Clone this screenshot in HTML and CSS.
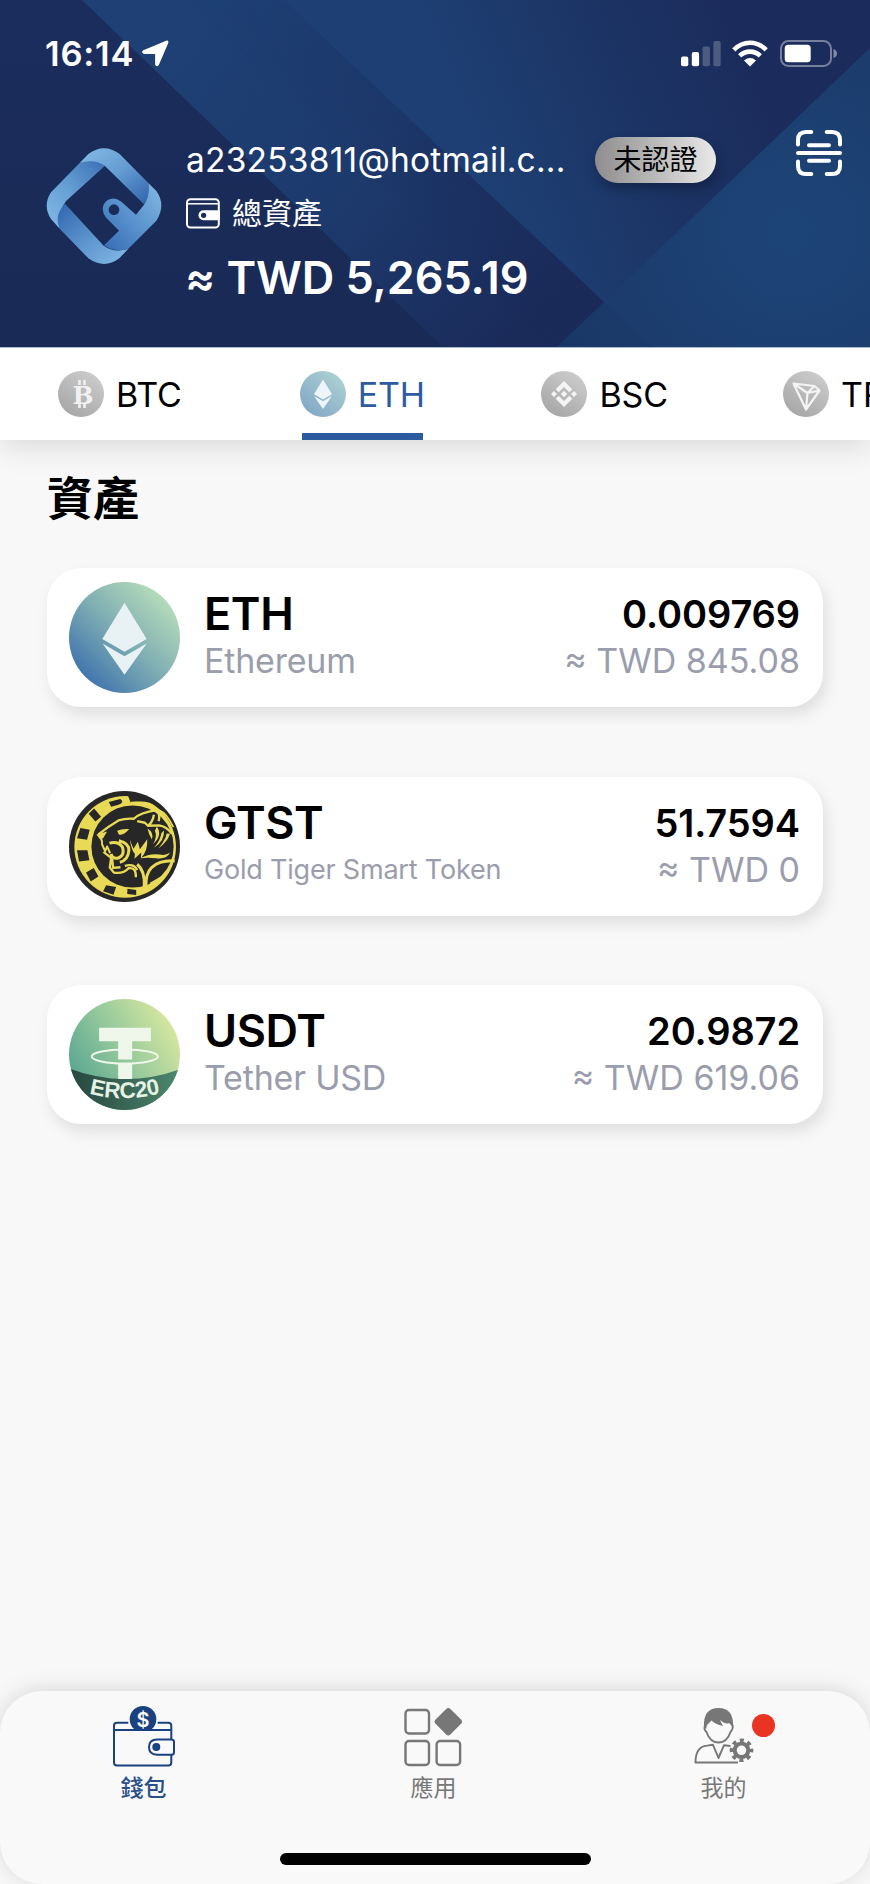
FILE: index.html
```html
<!DOCTYPE html>
<html lang="zh-Hant">
<head>
<meta charset="utf-8">
<title>錢包</title>
<link rel="stylesheet" href="styles.css">
</head>
<body>
<div class="app">
  <header class="header">
    <svg class="header-bg" viewBox="0 0 870 347" preserveAspectRatio="none" aria-hidden="true">
      <defs>
        <linearGradient id="bandA" gradientUnits="userSpaceOnUse" x1="180" y1="30" x2="520" y2="330"><stop offset="0" stop-color="#1e4074"/><stop offset=".5" stop-color="#1d3a6d"/><stop offset="1" stop-color="#1a2b5a"/></linearGradient>
        <linearGradient id="shade" gradientUnits="userSpaceOnUse" x1="183" y1="0" x2="230" y2="-50"><stop offset="0" stop-color="#1a2a59" stop-opacity="0"/><stop offset="1" stop-color="#1a2a59" stop-opacity=".3"/></linearGradient>
        <linearGradient id="fade" x1="0" y1="0" x2="0" y2="1"><stop offset="0" stop-color="#fff" stop-opacity=".15"/><stop offset=".45" stop-color="#fff"/></linearGradient>
        <mask id="fadeMask"><path fill="url(#fade)" d="M0 0H870V347H0z"/></mask>
        <linearGradient id="bandB" gradientUnits="userSpaceOnUse" x1="500" y1="200" x2="760" y2="90"><stop offset="0" stop-color="#1e3f73"/><stop offset=".4" stop-color="#1c3768"/><stop offset="1" stop-color="#1b2c5c"/></linearGradient>
        <radialGradient id="tri" gradientUnits="userSpaceOnUse" cx="790" cy="230" r="240"><stop offset="0" stop-color="#1d4477"/><stop offset="1" stop-color="#1b3a6a"/></radialGradient>
        <linearGradient id="left" x1="0" y1="0" x2="0" y2="1"><stop offset="0" stop-color="#1b2d5d"/><stop offset="1" stop-color="#192a55"/></linearGradient>
      </defs>
      <path fill="url(#left)" d="M0 0H870V347H0z"/>
      <path fill="url(#bandA)" d="M82 0H283L652 347H443z"/>
      <path fill="url(#shade)" mask="url(#fadeMask)" d="M183 0H283L652 347H552z"/>
      <path fill="url(#bandB)" d="M283 0H870V347H652z"/>
      <path fill="url(#tri)" d="M870 48V347H557z"/>
      <path fill="#18305f" fill-opacity=".2" d="M603 301L652 347H557z"/>
    </svg>

    <div class="status">
      <span class="time">16:14</span>
      <svg class="locate" viewBox="0 0 28 28"><path fill="#fff" d="M25 .7Q28 .2 27.200 3L17.800 25.200Q16.600 28 14.400 26.800Q13.600 26.200 13.600 25V14.400H2.600Q-.6 14 .3 11.800Q.7 10.900 2 10.400z"/></svg>
      <div class="status-icons">
        <svg width="40" height="27" viewBox="0 0 40 27"><g fill="#fff"><rect y="16.500" width="7.300" height="9.700" rx="2"/><rect x="10.800" y="12" width="7.300" height="14.200" rx="2"/><g opacity=".22"><rect x="21.600" y="6.600" width="7.300" height="19.600" rx="2"/><rect x="32.400" y="1" width="7.300" height="25.200" rx="2"/></g></g></svg>
        <svg class="wifi" width="36" height="27" viewBox="0 0 36 27"><g fill="none" stroke="#fff" stroke-width="4.600"><path d="M1.800 9.800Q9 2.700 18 2.700T34.200 9.800"/><path d="M7.700 15.800Q12 11.600 18 11.600T28.300 15.800"/></g><path fill="#fff" d="M12 20.400Q18 15.600 24 20.400L18 26.400z"/></svg>
        <svg class="battery" width="58" height="27" viewBox="0 0 58 27"><rect x="1" y="1" width="50" height="25" rx="7.500" fill="none" stroke="#fff" stroke-opacity=".4" stroke-width="2"/><rect x="4.700" y="4.700" width="26" height="17.600" rx="3.500" fill="#fff"/><path fill="#fff" fill-opacity=".45" d="M53.500 9Q57 10.500 57 13.500T53.500 18z"/></svg>
      </div>
    </div>

    <div class="account">
      <svg class="logo" viewBox="50 55 346 348">
        <defs>
          <linearGradient id="l1" x1="0" y1="1" x2="1" y2="0"><stop offset="0" stop-color="#83bbe6"/><stop offset=".5" stop-color="#649dd3"/><stop offset="1" stop-color="#3a6fb5"/></linearGradient>
          <linearGradient id="l2" x1="0" y1="0" x2="1" y2="1"><stop offset="0" stop-color="#84bbe5"/><stop offset=".5" stop-color="#649cd2"/><stop offset="1" stop-color="#3163ac"/></linearGradient>
          <linearGradient id="l3" x1="1" y1="0" x2="0" y2="1"><stop offset="0" stop-color="#83b9e3"/><stop offset=".5" stop-color="#5b94ce"/><stop offset="1" stop-color="#346bb4"/></linearGradient>
          <linearGradient id="l4" x1="0" y1="0" x2="1" y2="1"><stop offset="0" stop-color="#3264ae"/><stop offset=".5" stop-color="#5b93cd"/><stop offset="1" stop-color="#84bce7"/></linearGradient>
        </defs>
        <path fill="url(#l1)" d="M90 297L64 268Q38 228 64 188L150 100Q185 80 226 108L110 213Q88 238 90 297z"/>
        <path fill="url(#l4)" d="M106 222Q72 258 90 297L176 386Q224 420 269 386L296 357Q254 371 222 348L106 222z"/>
        <path fill="url(#l2)" d="M150 100L176 73Q223 38 270 73L356 160Q361 199 343 224L225 108Q193 87 150 100z"/>
        <path fill="url(#l3)" d="M356 160L380 184Q410 226 380 273L296 357Q255 370 223 347L268 303L228 263Q208 232 233 212Q253 199 275 216L319 255L343 225Q361 200 356 160z"/>
        <circle cx="253" cy="240" r="16" fill="#1a2d5a"/>
      </svg>
      <div class="account-info">
        <div class="account-row">
          <span class="email">a23253811@hotmail.c...</span>
          <span class="badge">未認證</span>
        </div>
        <div class="total-label">
          <svg width="35" height="31" viewBox="0 0 35 31"><rect x="1" y="1.200" width="31.800" height="28.400" rx="3.500" fill="none" stroke="#fff" stroke-width="2"/><path d="M1 5.800H32.500" stroke="#fff" stroke-width="1.500"/><path fill="#fff" d="M17.500 12.300H34V22.300H17.500A5 5 0 0 1 17.500 12.300z"/><circle cx="17.600" cy="17.300" r="2.600" fill="#1a2c5b"/></svg>
          <span>總資產</span>
        </div>
        <div class="total">≈ TWD 5,265.19</div>
      </div>
      <svg class="scan" width="46" height="46" viewBox="0 0 46 46"><g fill="none" stroke="#fff" stroke-width="4" stroke-linecap="round"><path d="M2 14.500V10Q2 2 10 2H15.300M30.700 2H36Q44 2 44 10V14.500M44 31.500V36Q44 44 36 44H30.700M15.300 44H10Q2 44 2 36V31.500M2 23H44M13 15.300H33M13 30.700H33"/></g></svg>
    </div>
  </header>

  <nav class="tabs">
    <a class="tab">
      <svg class="tab-icon" viewBox="0 0 46 46"><defs><linearGradient id="gray" x1=".8" y1="0" x2=".2" y2="1"><stop offset="0" stop-color="#cdcdcd"/><stop offset="1" stop-color="#a5a5a5"/></linearGradient></defs><circle cx="23" cy="23" r="23" fill="url(#gray)"/><path d="M21.500 9V14M26.500 9V14M21.500 32V37M26.500 32V37" stroke="#f1f1f1" stroke-width="2.600"/><text class="coin-b" x="25" y="32.500">B</text></svg>
      <span>BTC</span>
    </a>
    <a class="tab active">
      <svg class="tab-icon" viewBox="0 0 46 46"><defs><linearGradient id="ethS" x1=".85" y1=".1" x2=".15" y2=".9"><stop offset="0" stop-color="#abd0d2"/><stop offset="1" stop-color="#83a8c6"/></linearGradient></defs><circle cx="23" cy="23" r="23" fill="url(#ethS)"/><path fill="#eef5fa" d="M23 8.500L32 23.200L23 28.500L14 23.200zM14 25L23 30.300L32 25L23 38z"/></svg>
      <span>ETH</span>
    </a>
    <a class="tab">
      <svg class="tab-icon" viewBox="0 0 46 46"><circle cx="23" cy="23" r="23" fill="url(#gray)"/><path fill="#f4f4f4" d="M23 10L31.300 18.200L28.300 21.200L23 16L17.700 21.200L14.700 18.200zM23 36L14.700 27.800L17.700 24.800L23 30L28.300 24.800L31.300 27.800zM23 19.800L26.200 23L23 26.200L19.800 23zM13 20L16 23L13 26L10 23zM33 20L36 23L33 26L30 23z"/></svg>
      <span>BSC</span>
    </a>
    <a class="tab">
      <svg class="tab-icon" viewBox="0 0 46 46"><circle cx="23" cy="23" r="23" fill="url(#gray)"/><path fill="none" stroke="#f4f4f4" stroke-width="2.200" stroke-linejoin="round" d="M10.500 12.500L31.500 15L36.500 19.500L23 38.500zM10.500 12.500L24.500 22L31.500 15M24.500 22L36.500 19.500M24.500 22L23 38.500"/></svg>
      <span>TRX</span>
    </a>
  </nav>

  <main class="assets">
    <h1 class="assets-title">資產</h1>
    <div class="cards">
      <section class="card">
        <svg class="coin" viewBox="0 0 110 110"><defs><linearGradient id="eth" x1=".85" y1=".15" x2=".15" y2=".85"><stop offset="0" stop-color="#b3dab9"/><stop offset=".5" stop-color="#7faeb3"/><stop offset="1" stop-color="#4377ae"/></linearGradient></defs><circle cx="55" cy="55" r="55" fill="url(#eth)"/><path fill="#e8f1f3" d="M55 20.500L77 56.500L55 69L33 56.500zM33.300 61L55 73.500L77 61L55 92z"/></svg>
        <div class="names"><div class="symbol">ETH</div><div class="name">Ethereum</div></div>
        <div class="values"><div class="amount">0.009769</div><div class="fiat">≈ TWD 845.08</div></div>
      </section>
      <section class="card">
        <svg class="coin" viewBox="58 62 332 332">
          <circle cx="224" cy="228" r="166" fill="#272727"/>
          <circle cx="226" cy="229" r="152" fill="#e8da57"/>
          <circle cx="248" cy="228" r="123" fill="#272727"/>
          <path fill="#272727" d="M232 70Q300 74 345 118L326 108Q285 86 243 98z"/>
          <path fill="#272727" d="M177 95L211 86Q226 96 206 103L184 109zM117 130L133 114L154 139L137 153zM92 173L120 178L112 208L82 203zM82 239H113L119 269L88 273zM109 306L132 292L146 318L123 333zM169 344L199 349L191 372L160 362zM233 354L259 358V373L232 370z"/>
          <!-- head outline, ear and back -->
          <path fill="none" stroke="#e8da57" stroke-width="7" stroke-linejoin="round" d="M146 192Q172 170 206 150Q228 143 252 145Q270 126 320 119Q332 130 326 152M262 152L285 157L294 166Q308 156 312 133M294 166L327 165Q350 168 366 190"/>
          <path fill="none" stroke="#e8da57" stroke-width="5" d="M243 97Q290 92 328 120Q350 128 370 170"/>
          <!-- nose, lip and jaw -->
          <path fill="#e8da57" d="M140 192L172 183L160 203L151 207zM202 181Q217 174 238 176Q222 196 207 192z"/>
          <path fill="none" stroke="#e8da57" stroke-width="6" stroke-linejoin="round" d="M154 205Q158 213 157 222L166 242L172 228L181 248"/>
          <path fill="none" stroke="#e8da57" stroke-width="9" stroke-linejoin="round" d="M179 218Q205 211 218 230Q226 256 203 263Q187 265 184 250M207 211Q238 218 237 240Q235 269 210 275"/>
          <path fill="none" stroke="#e8da57" stroke-width="7" stroke-linejoin="round" d="M161 244L184 262L180 291L192 306Q222 310 236 293Q259 289 258 320M187 264L190 292L212 290M225 286Q252 278 262 298"/>
          <!-- cheek fur and stripes -->
          <path fill="#e8da57" d="M240 207Q245 222 251 235L264 214L270 236L292 206Q294 240 273 264L274 246L254 265L255 250Q245 240 240 207zM293 174Q313 187 306 207Q296 192 293 174zM321 169Q339 195 309 221Q323 199 315 180zM342 180Q345 211 312 232Q333 206 334 188zM360 190Q353 214 325 234Q348 206 350 189zM272 263Q300 247 329 252Q348 256 360 246Q350 268 318 263Q292 260 272 263z"/>
          <path fill="none" stroke="#e8da57" stroke-width="9" d="M262 281Q286 301 283 347M374 271Q328 269 305 291Q287 310 288 346M302 340L331 324"/>
        </svg>
        <div class="names"><div class="symbol">GTST</div><div class="name name-long">Gold Tiger Smart Token</div></div>
        <div class="values"><div class="amount">51.7594</div><div class="fiat">≈ TWD 0</div></div>
      </section>
      <section class="card">
        <svg class="coin" viewBox="58 58 332 332">
          <defs>
            <linearGradient id="usdt" x1=".95" y1=".25" x2=".1" y2=".75"><stop offset="0" stop-color="#d5e79f"/><stop offset=".5" stop-color="#98ca9c"/><stop offset="1" stop-color="#5da892"/></linearGradient>
            <linearGradient id="usdtDark" x1="0" y1="0" x2="1" y2="0"><stop offset="0" stop-color="#28463e"/><stop offset=".55" stop-color="#3b6857"/><stop offset="1" stop-color="#4b896e"/></linearGradient>
            <clipPath id="round"><circle cx="224" cy="224" r="166"/></clipPath>
            <path id="arc" d="M118 341Q226 370 344 337"/>
          </defs>
          <circle cx="224" cy="224" r="166" fill="url(#usdt)"/>
          <path clip-path="url(#round)" fill="url(#usdtDark)" d="M58 266Q224 328 390 268V400H58z"/>
          <ellipse cx="225" cy="230" rx="99" ry="21" fill="none" stroke="#eef7ea" stroke-width="6"/>
          <path fill="#eef7ea" d="M148 144H303V184H247V239H205V184H148zM205 251H247V297H205z"/>
          <text class="erc"><textPath href="#arc">ERC20</textPath></text>
        </svg>
        <div class="names"><div class="symbol">USDT</div><div class="name">Tether USD</div></div>
        <div class="values"><div class="amount">20.9872</div><div class="fiat">≈ TWD 619.06</div></div>
      </section>
    </div>
  </main>

  <footer class="bottom">
    <div class="menu">
      <a class="menu-item current">
        <svg width="64" height="64" viewBox="0 0 64 64"><circle cx="32" cy="14.200" r="13.300" fill="#1a4180"/><text class="dollar" x="32" y="21.500">$</text><path fill="#f9f9f9" d="M17 25.500H47V31H17z"/><g fill="none" stroke="#1a4180" stroke-width="2"><path d="M17.300 17.800H6Q3 17.800 3 20.800V57.500Q3 60.500 6 60.500H57.300Q60.300 60.500 60.300 57.500V50M60.300 34V20.800Q60.300 17.800 57.300 17.800H46.700M3 25H60.300"/><path d="M60.500 34.500H46Q38 34.500 38 42T46 49.800H60.500Q63 49.800 63 47.300V37Q63 34.500 60.500 34.500z"/></g><circle cx="45.300" cy="42" r="4" fill="#1a4180"/></svg>
        <span>錢包</span>
      </a>
      <a class="menu-item">
        <svg width="64" height="64" viewBox="0 0 64 64"><g fill="none" stroke="#777" stroke-width="2.400"><rect x="4.500" y="5" width="23.500" height="23.500" rx="3.500"/><rect x="4.500" y="36" width="23.500" height="24" rx="3.500"/><rect x="35.600" y="36" width="23.500" height="24" rx="3.500"/></g><rect x="36.800" y="6.200" width="21" height="21" rx="3" transform="rotate(45 47.300 16.700)" fill="#777"/></svg>
        <span>應用</span>
      </a>
      <a class="menu-item">
        <svg width="64" height="64" viewBox="0 0 64 64"><path fill="#777" d="M13 22Q12 3 27.500 3T42 22L38 18Q35 20 29 15Q31 19 32 21Q24 19 20.500 15.500L16 20L15 24z"/><g fill="none" stroke="#777" stroke-width="1.900" stroke-linejoin="round"><path d="M14.500 19Q12 24 15.500 27Q19 37.500 27.500 37.500T39.500 27Q43 23 41 19"/><path d="M47 57.500H4.500Q4.500 41.500 16 40.600L22 39.800L27.500 53L33 40.200L39.500 41"/></g><circle cx="50.500" cy="45.300" r="6.800" fill="none" stroke="#777" stroke-width="4"/><circle cx="50.500" cy="45.300" r="10" fill="none" stroke="#777" stroke-width="3.600" stroke-dasharray="4 3.854" stroke-dashoffset="2"/></svg>
        <span>我的</span>
        <i class="dot"></i>
      </a>
    </div>
    <div class="home-bar"></div>
  </footer>
</div>
</body>
</html>
```
FILE: styles.css
```css
* { box-sizing: border-box; }
body { margin: 0; background: #f8f8f8; font-family: Inter, "Noto Sans CJK TC", sans-serif; color: #000; }
svg { display: block; flex: none; }
.app { width: 870px; height: 1884px; display: flex; flex-direction: column; overflow: hidden; }

.header { position: relative; height: 348px; flex: none; color: #fff; border-bottom: 1px solid #a9b8d6; }
.header-bg { position: absolute; inset: 0; width: 870px; height: 347px; }
.status { position: relative; display: flex; align-items: center; height: 107px; padding-left: 45px; padding-right: 32px; }
.time { font-size: 34.500px; font-weight: 600; line-height: 40px; width: 97px; letter-spacing: .8px; }
.locate { width: 27px; height: 27px; }
.status-icons { display: flex; margin-left: auto; }
.wifi { margin-left: 11px; }
.battery { margin-left: 12px; }

.account { position: relative; display: flex; align-items: flex-start; padding-left: 46px; padding-right: 28px; }
.logo { width: 116px; height: 116px; margin-top: 41px; }
.account-info { margin-left: 24px; margin-top: 30px; }
.account-row { display: flex; align-items: center; height: 46px; }
.email { width: 409px; font-size: 33.500px; letter-spacing: .22px; white-space: nowrap; }
.badge { width: 121px; height: 46px; border-radius: 23px; background: linear-gradient(90deg, #8e8c8c, #e9e9e9); color: #000; font-size: 28px; line-height: 47px; text-align: center; box-shadow: 2px 6px 12px rgba(0, 0, 0, .28); }
.total-label { display: flex; align-items: center; gap: 11px; height: 44px; margin-top: 8px; font-size: 30px; line-height: 44px; }
.total { margin: 16px 0 0 -1px; font-size: 45px; line-height: 54px; font-weight: 600; white-space: nowrap; letter-spacing: -.1px; }
.scan { margin-left: auto; margin-top: 23px; }

.tabs { display: flex; flex: none; height: 92px; background: #fff; padding-left: 58px; box-shadow: 0 8px 30px rgba(0, 0, 0, .12); clip-path: inset(0 0 -60px 0); }
.tab { position: relative; display: flex; flex: none; align-items: center; gap: 12px; width: 241.700px; height: 92px; font-size: 34px; letter-spacing: -.1px; }
.tab-icon { width: 46px; height: 46px; }
.active { color: #2d5b9f; }
.active::after { content: ""; position: absolute; left: 2px; bottom: 0; width: 121px; height: 7px; background: #2d5b9f; }
.coin-b { font: bold 25px "DejaVu Serif", serif; fill: #f1f1f1; text-anchor: middle; }

.assets { flex: 1; padding: 28px 47px 0; }
.assets-title { margin: 0; font-size: 46px; line-height: 60px; font-weight: 700; }
.cards { display: flex; flex-direction: column; gap: 69.500px; margin-top: 40px; }
.card { display: flex; align-items: center; height: 139px; padding: 0 23px 0 22px; border-radius: 34px; background: #fff; box-shadow: 4px 8px 16px rgba(0, 0, 0, .1); }
.coin { width: 111px; height: 111px; }
.names { margin: 0 0 4px 24px; }
.values { margin: 0 0 4px auto; text-align: right; }
.symbol { font-size: 45px; line-height: 50px; font-weight: 600; letter-spacing: -.4px; }
.name, .fiat { font-size: 34px; line-height: 43px; color: #9a9dab; white-space: nowrap; letter-spacing: -.2px; }
.fiat { letter-spacing: 0; }
.name-long { font-size: 27px; }
.amount { font-size: 38px; line-height: 50px; font-weight: 600; letter-spacing: -.1px; }
.erc { font: bold 67px "Liberation Sans", sans-serif; fill: #e4f3e4; }

.bottom { flex: none; height: 193px; border-radius: 42px; background: #f9f9f9; box-shadow: 0 -2px 22px rgba(0, 0, 0, .13); }
.menu { display: flex; padding: 14px 0 0; }
.menu-item { position: relative; flex: 1; display: flex; flex-direction: column; align-items: center; padding-right: 3px; color: #777; font-size: 23px; line-height: 34px; }
.menu-item svg { margin-left: -1px; }
.menu-item span { margin-top: 2px; }
.current { color: #2a5088; font-weight: 500; }
.dollar { font: 600 20px Inter, sans-serif; fill: #fff; text-anchor: middle; }
.dot { position: absolute; left: 172px; top: 9px; width: 23px; height: 23px; border-radius: 50%; background: #e93323; }
.home-bar { width: 311px; height: 12px; margin: 48px 0 0 280px; border-radius: 6px; background: #000; }
```
